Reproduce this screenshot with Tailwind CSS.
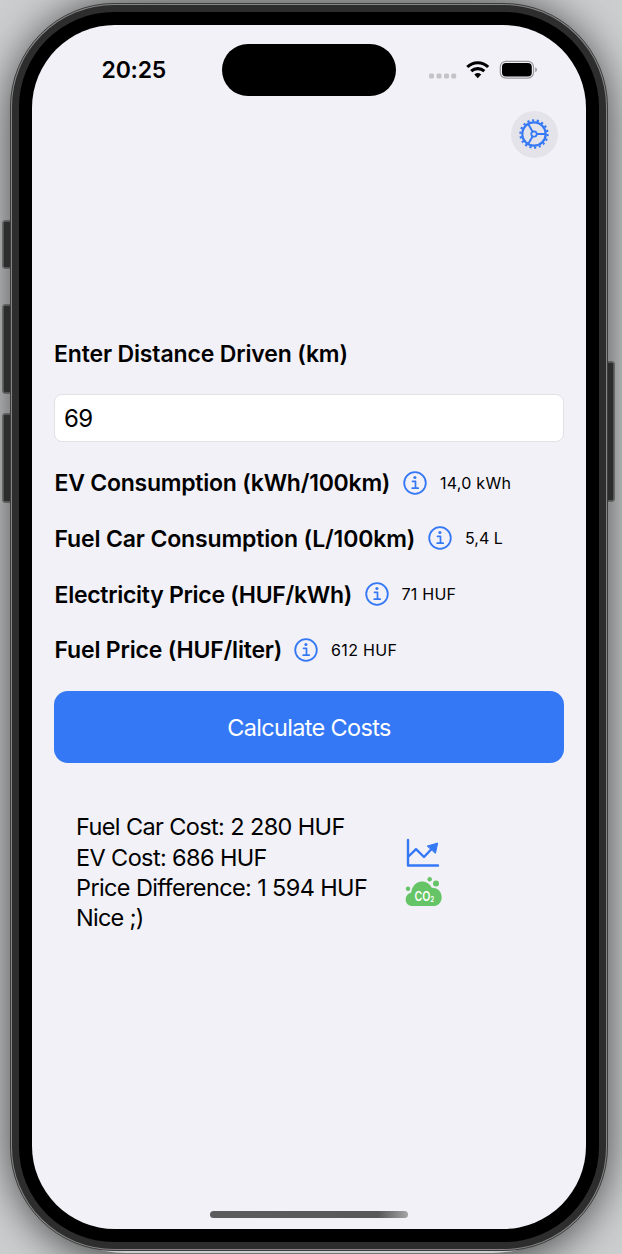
<!DOCTYPE html>
<html lang="en"><head><meta charset="utf-8"><title>EV Cost Calculator</title>
<script src="https://cdn.jsdelivr.net/npm/@tailwindcss/browser@4"></script></head>
<body class="relative h-[1254px] w-[622px] overflow-hidden bg-[#cccecf] font-['Inter',sans-serif] text-black">
<div class="absolute left-[16px] top-[5px] h-[1248px] w-[586px] rounded-[110px] shadow-[0_2px_44px_5px_rgba(0,0,0,0.7)]"></div>
<div class="absolute left-[3px] top-[221px] h-[47px] w-[10px] rounded-[2px] border border-[#555] bg-[#2c2c2c] outline outline-[#333]/50"></div>
<div class="absolute left-[3px] top-[305px] h-[88px] w-[10px] rounded-[2px] border border-[#555] bg-[#2c2c2c] outline outline-[#333]/50"></div>
<div class="absolute left-[3px] top-[414px] h-[88px] w-[10px] rounded-[2px] border border-[#555] bg-[#2c2c2c] outline outline-[#333]/50"></div>
<div class="absolute left-[604px] top-[362px] h-[139px] w-[10px] rounded-[2px] border border-[#555] bg-[#2c2c2c] outline outline-[#333]/50"></div>
<div class="relative ml-[10px] h-[1251px] w-[598px] pt-[3px]">
<div class="h-[1248px] rounded-[104px] border border-[#3c3c3c] bg-[#858585] p-px">
<div class="h-full rounded-[102px] bg-[#2d2d2d] p-[7px]">
<div class="h-full rounded-[95px] bg-black p-[13px]">
<main class="flex h-[1204px] w-[554px] flex-col rounded-[83px] bg-[#f2f1f7]">
<header class="flex h-[86px] pt-[19px]">
<div class="w-[190px] pl-[69.500px] pt-[12px] text-[23px] font-semibold leading-[28px]"><span class="tracking-[-0.2px]">20:25</span></div>
<div class="h-[52px] w-[174px] rounded-full bg-black"></div>
<svg class="ml-[32px] mt-[14px]" width="112" height="24" viewBox="428 58 112 24"><g fill="#c3c3c8"><rect x="429" y="73.500" width="5" height="5" rx="1.500"/><rect x="436.500" y="73.500" width="5" height="5" rx="1.500"/><rect x="444" y="73.500" width="5" height="5" rx="1.500"/><rect x="451.200" y="73.500" width="5" height="5" rx="1.500"/></g>
<g fill="none" stroke="#000" stroke-width="3.100"><path d="M467.300 67A15 15 0 0 1 488.200 67M471.200 71.200A9.500 9.500 0 0 1 484.300 71.200"/></g><path d="M474.300 74.400Q477.800 71.600 481.200 74.400L477.800 78.200Z"/>
<rect x="500.300" y="61.300" width="33.200" height="16.800" rx="5.500" fill="none" stroke="#98989d" stroke-width="1.200"/><rect x="502" y="63" width="29.800" height="13.400" rx="4"/><path d="M535.200 67.200Q537 68 537 69.700Q537 71.400 535.200 72.200Z" fill="#98989d"/></svg>
</header>
<div class="flex justify-end pr-[28px]">
<button class="flex size-[47px] items-center justify-center rounded-full bg-[#e4e3e9]" aria-label="Settings"><svg width="31" height="31" viewBox="-15 -15 31 31" fill="none" stroke="#3478f6"><circle r="13.600" stroke-width="2.200" stroke-dasharray="2.150 2.597"/><circle r="11.700" stroke-width="2.200"/><circle r="2.700" stroke-width="1.800"/><path stroke-width="1.900" d="M3 0H12M-1.500-2.600L-5.900-10.200M-1.500 2.600L-5.900 10.200"/></svg></button></div>
<section class="flex flex-col px-[22px] pt-[182px]">
<h1 class="h-[28px] text-[23px] font-semibold leading-[28px]"><span class="tracking-[-0.15px]">Enter Distance Driven (km)</span></h1>
<input class="mt-[26px] h-[48px] w-[510px] rounded-[8px] border border-[#e2e1e6] bg-white px-[9px] text-[24px] tracking-[-0.7px]" value="69" aria-label="Distance">
<div class="mt-[13px] grid auto-rows-[55.600px] items-center text-[23px] font-semibold">
<div class="flex items-center"><span class="w-[349px] whitespace-nowrap pl-[0.500px] pt-px tracking-[-0.24px]">EV Consumption (kWh/100km)</span><svg class="shrink-0" width="24" height="24"><use href="#info"/></svg><span class="ml-[13px] text-[16px] font-normal tracking-[0.25px]">14,0 kWh</span></div>
<div class="flex items-center"><span class="w-[374px] whitespace-nowrap pl-[0.500px] pt-[2px] tracking-[-0.15px]">Fuel Car Consumption (L/100km)</span><svg class="shrink-0" width="24" height="24"><use href="#info"/></svg><span class="ml-[13px] text-[16px] font-normal">5,4 L</span></div>
<div class="flex items-center"><span class="w-[311px] whitespace-nowrap pl-[0.500px] pt-[2px] tracking-[-0.28px]">Electricity Price (HUF/kWh)</span><svg class="shrink-0" width="24" height="24"><use href="#info"/></svg><span class="ml-[12.500px] text-[16px] font-normal tracking-[0.25px]">71 HUF</span></div>
<div class="flex items-center"><span class="w-[240px] whitespace-nowrap pl-[0.500px] pt-[2px] tracking-[-0.18px]">Fuel Price (HUF/liter)</span><svg class="shrink-0" width="24" height="24"><use href="#info"/></svg><span class="ml-[13px] text-[16px] font-normal tracking-[0.35px]">612 HUF</span></div>
</div>
<button class="mt-[14px] h-[72px] w-[510px] rounded-[14px] bg-[#3478f6] text-[23.500px] tracking-[-0.67px] text-white">Calculate Costs</button>
<div class="flex pl-[22px] pt-[49px]">
<div class="w-[329px] whitespace-nowrap text-[23.500px] leading-[30.300px] tracking-[-0.62px]"><p>Fuel Car Cost: 2 280 HUF</p><p>EV Cost: 686 HUF</p><p>Price Difference: 1 594 HUF</p><p class="tracking-[-0.75px]">Nice ;)</p></div>
<div class="flex flex-col pt-[26px]">
<svg width="36" height="30" viewBox="405 838 36 30" fill="none" stroke="#3478f6" stroke-width="2.400" stroke-linecap="round" stroke-linejoin="round"><path d="M408 840V865.500H438M408.500 856.500L416 849.200L424 857L432 848.500"/><path d="M427.500 846L437.700 843L435.500 853Z" fill="#3478f6" stroke-width="1"/></svg>
<svg class="mt-[8px]" width="38" height="32" viewBox="405 876 38 32"><g fill="#65c466"><circle cx="408" cy="888.800" r="2.200"/><circle cx="429.700" cy="879.300" r="2.200"/><circle cx="436" cy="883.500" r="3"/><path d="M412.500 906C408.500 906 405.700 903.500 405.700 899.500C405.700 896 408 893.300 411.200 892.500C412 886 416.500 881.500 422 881.500C426.500 881.500 430 884 431.800 887.800C437.500 887.500 441.700 891.500 441.700 897.200C441.700 902.500 438 906 433 906Z"/></g><text x="414.500" y="900.500" fill="#fff" font-size="13" font-weight="600" textLength="19.500" lengthAdjust="spacingAndGlyphs">CO<tspan font-size="7" font-weight="700" dy="1">2</tspan></text></svg>
</div></div>
</section>
<div class="mx-auto mb-[11px] mt-auto h-[7px] w-[198px] rounded-full bg-linear-to-r from-[#5c5c5e] via-[#58585a] via-85% to-[#a5a5a8]"></div>
</main></div></div></div></div>
<svg class="hidden"><symbol id="info" viewBox="0 0 24 24"><circle cx="12" cy="12" r="10.800" fill="none" stroke="#3478f6" stroke-width="1.800"/><circle cx="11.900" cy="6.500" r="1.550" fill="#3478f6"/><path d="M9.500 10.300H12.500V17M9.200 17.200H15.200" fill="none" stroke="#3478f6" stroke-width="1.700" stroke-linecap="round" stroke-linejoin="round"/></symbol></svg>
</body></html>
